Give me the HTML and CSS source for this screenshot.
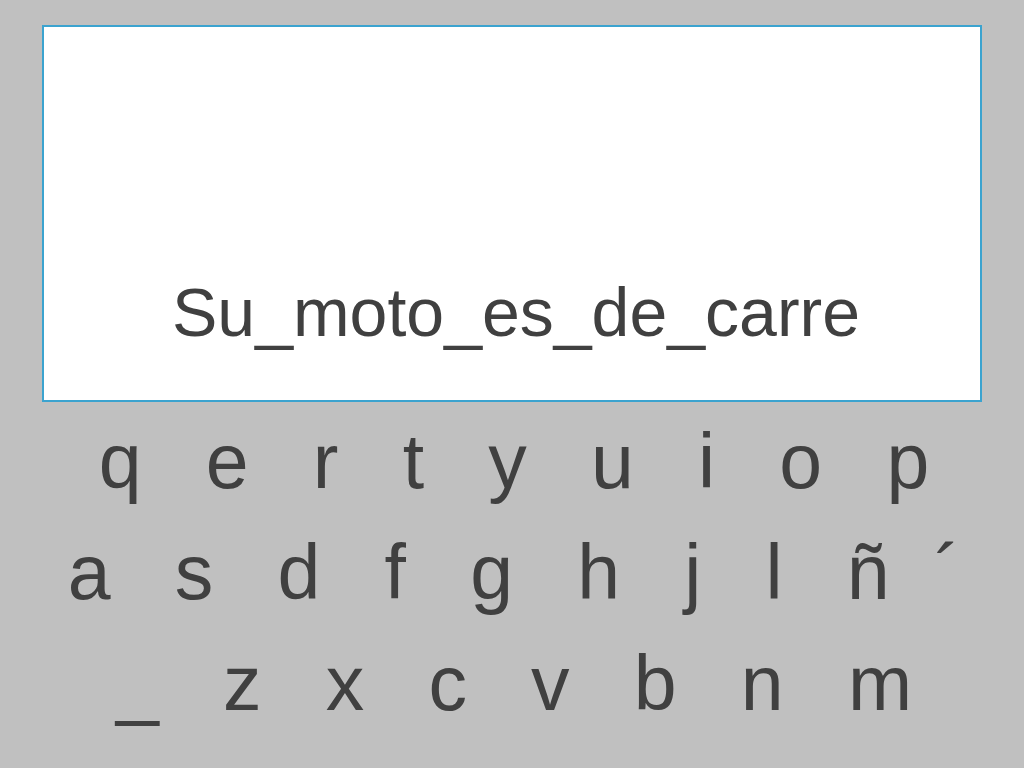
FILE: index.html
```html
<!DOCTYPE html>
<html lang="es">
<head>
    <meta charset="UTF-8">
    <meta name="viewport" content="width=device-width, initial-scale=1.0">
    <title>Teclado</title>
    <link rel="stylesheet" href="styles.css">
</head>
<body>
    <div class="slide">
        <div class="answer-box">
            <p class="answer">Su_moto_es_de_carre</p>
        </div>

        <div class="keyboard">
            <div class="key-row">
                <span class="key">q</span>
                <span class="key">e</span>
                <span class="key">r</span>
                <span class="key">t</span>
                <span class="key">y</span>
                <span class="key">u</span>
                <span class="key">i</span>
                <span class="key">o</span>
                <span class="key">p</span>
            </div>
            <div class="key-row">
                <span class="key">a</span>
                <span class="key">s</span>
                <span class="key">d</span>
                <span class="key">f</span>
                <span class="key">g</span>
                <span class="key">h</span>
                <span class="key">j</span>
                <span class="key">l</span>
                <span class="key">ñ</span>
                <span class="key key-accent">´</span>
            </div>
            <div class="key-row">
                <span class="key">_</span>
                <span class="key">z</span>
                <span class="key">x</span>
                <span class="key">c</span>
                <span class="key">v</span>
                <span class="key">b</span>
                <span class="key">n</span>
                <span class="key">m</span>
            </div>
        </div>
    </div>
</body>
</html>
```

FILE: styles.css
```css
:root {
    --bg-color: #c0c0c0;
    --text-color: #404040;
    --border-color: #3ba3cf;
}
body {
    margin: 0;
    padding: 0;
    background-color: var(--bg-color);
    color: var(--text-color);
    font-family: 'Liberation Sans', Arial, Helvetica, sans-serif;
}
.slide {
    width: 1024px;
    height: 768px;
    padding-top: 25px;
    box-sizing: border-box;
}
.answer-box {
    width: 940px;
    height: 377px;
    margin-left: 42px;
    box-sizing: border-box;
    background-color: white;
    border: 2px solid var(--border-color);
    display: flex;
    flex-direction: column;
    justify-content: flex-end;
    align-items: center;
    padding-bottom: 48px;
}
.answer {
    margin: 0;
    font-size: 68px;
    line-height: 80px;
    padding-left: 8px;
}
.keyboard {
    margin-top: 4px;
    padding-left: 4px;
    font-size: 77px;
}
.key-row {
    display: flex;
    justify-content: center;
    gap: 0.834em;
    line-height: 111px;
}
.key-accent {
    margin-left: -0.25em;
}
```
